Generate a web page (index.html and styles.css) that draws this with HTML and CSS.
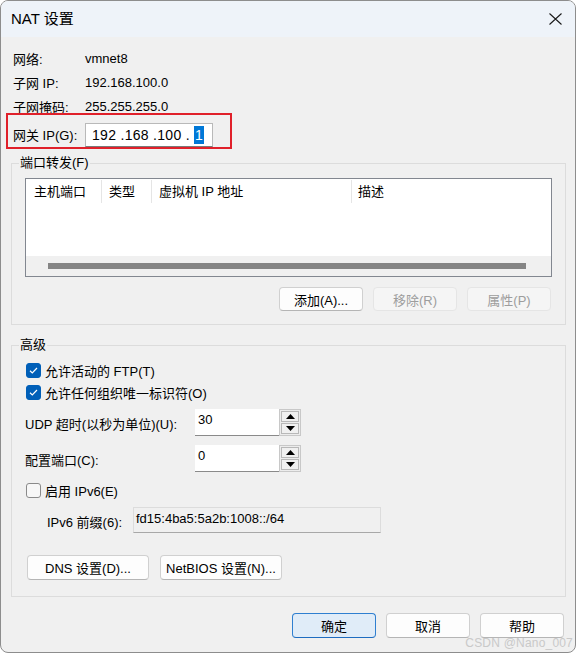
FILE: index.html
```html
<!DOCTYPE html>
<html lang="zh-CN">
<head>
<meta charset="utf-8">
<title>NAT 设置</title>
<link rel="stylesheet" href="styles.css">
</head>
<body>
<div class="dialog">
  <div class="titlebar">
    <span class="title">NAT 设置</span>
    <svg class="close" width="13" height="12" viewBox="0 0 13 12"><path d="M0.5 0.5L12.5 11.5M12.5 0.5L0.5 11.5" stroke="#1a1a1a" stroke-width="1.1" fill="none"/></svg>
  </div>
  <div class="content">
    <div class="info">
      <div class="info-row"><span class="info-label">网络:</span><span>vmnet8</span></div>
      <div class="info-row"><span class="info-label">子网 IP:</span><span>192.168.100.0</span></div>
      <div class="info-row"><span class="info-label">子网掩码:</span><span>255.255.255.0</span></div>
    </div>
    <div class="gateway">
      <span class="gw-label">网关 IP(G):</span>
      <div class="ip-box">192 .168 .100 . <span class="ip-sel">1</span></div>
    </div>

    <fieldset class="group group-pf">
      <legend>端口转发(F)</legend>
      <div class="pf-body">
        <div class="list">
          <div class="list-head">
            <div class="col c1">主机端口</div>
            <div class="col c2">类型</div>
            <div class="col c3">虚拟机 IP 地址</div>
            <div class="col c4">描述</div>
          </div>
          <div class="list-body"></div>
          <div class="list-scroll"><div class="thumb"></div></div>
        </div>
        <div class="pf-buttons">
          <button class="btn">添加(A)...</button>
          <button class="btn disabled">移除(R)</button>
          <button class="btn disabled">属性(P)</button>
        </div>
      </div>
    </fieldset>

    <fieldset class="group group-adv">
      <legend>高级</legend>
      <div class="adv-body">
        <div class="check-row">
          <span class="cb checked"><svg width="15" height="15" viewBox="0 0 15 15"><path d="M4 7.8L6.3 10L11 5" stroke="#fff" stroke-width="1.2" fill="none"/></svg></span>
          <span>允许活动的 FTP(T)</span>
        </div>
        <div class="check-row">
          <span class="cb checked"><svg width="15" height="15" viewBox="0 0 15 15"><path d="M4 7.8L6.3 10L11 5" stroke="#fff" stroke-width="1.2" fill="none"/></svg></span>
          <span>允许任何组织唯一标识符(O)</span>
        </div>
        <div class="spin-row first">
          <span class="spin-label">UDP 超时(以秒为单位)(U):</span>
          <div class="spin-field">30</div>
          <div class="spin-btns">
            <div class="spin-btn"><svg width="9" height="5" viewBox="0 0 9 5"><path d="M0 5L4.5 0L9 5Z" fill="#000"/></svg></div>
            <div class="spin-btn"><svg width="9" height="5" viewBox="0 0 9 5"><path d="M0 0L4.5 5L9 0Z" fill="#000"/></svg></div>
          </div>
        </div>
        <div class="spin-row second">
          <span class="spin-label">配置端口(C):</span>
          <div class="spin-field">0</div>
          <div class="spin-btns">
            <div class="spin-btn"><svg width="9" height="5" viewBox="0 0 9 5"><path d="M0 5L4.5 0L9 5Z" fill="#000"/></svg></div>
            <div class="spin-btn"><svg width="9" height="5" viewBox="0 0 9 5"><path d="M0 0L4.5 5L9 0Z" fill="#000"/></svg></div>
          </div>
        </div>
        <div class="check-row ipv6">
          <span class="cb"></span>
          <span>启用 IPv6(E)</span>
        </div>
        <div class="prefix-row">
          <span class="prefix-label">IPv6 前缀(6):</span>
          <div class="prefix-field">fd15:4ba5:5a2b:1008::/64</div>
        </div>
        <div class="adv-buttons">
          <button class="btn wide">DNS 设置(D)...</button>
          <button class="btn wide">NetBIOS 设置(N)...</button>
        </div>
      </div>
    </fieldset>

    <div class="footer">
      <button class="btn foot primary">确定</button>
      <button class="btn foot">取消</button>
      <button class="btn foot">帮助</button>
    </div>
  </div>
  <div class="watermark">CSDN @Nano_007</div>
</div>
</body>
</html>
```

FILE: styles.css
```css
html, body {
  margin: 0;
  padding: 0;
  background: #ffffff;
}

.dialog {
  position: relative;
  width: 576px;
  height: 653px;
  box-sizing: border-box;
  border: 1px solid #8d8d8d;
  border-radius: 8px;
  background: #f0f0f0;
  overflow: hidden;
  display: flex;
  flex-direction: column;
  font-family: "Liberation Sans", "Noto Sans CJK SC", sans-serif;
  font-size: 13px;
  color: #000;
}

.titlebar {
  height: 36px;
  flex: none;
  display: flex;
  align-items: center;
  padding-left: 10px;
  background: #eef3f9;
}

.title {
  font-size: 15px;
  line-height: 18px;
}

.close {
  margin-left: auto;
  margin-right: 13px;
}

.content {
  flex: 1;
  display: flex;
  flex-direction: column;
  padding: 9px 9px 0 10px;
}

.info {
  display: flex;
  flex-direction: column;
  padding-left: 2px;
}

.info-row {
  height: 24px;
  display: flex;
  align-items: center;
}

.info-label {
  width: 72px;
}

.gateway {
  margin-top: -5px;
  margin-left: -5px;
  width: 226px;
  height: 36px;
  box-sizing: border-box;
  border: 2px solid #e0202a;
  padding: 7px 0 0 5px;
  display: flex;
  align-items: center;
}

.gw-label {
  width: 72px;
}

.ip-box {
  width: 128px;
  height: 24px;
  box-sizing: border-box;
  background: #fff;
  border: 1px solid #b9b9b9;
  border-bottom-color: #7a7a7a;
  padding-left: 6px;
  font-size: 14px;
  letter-spacing: 0.3px;
  line-height: 22px;
  white-space: pre;
}

.ip-sel {
  background: #0078d7;
  color: #fff;
  padding: 1px 1px;
}

.group {
  margin: 0;
  padding: 0 7px;
  border: 1px solid #dcdcdc;
  min-width: 0;
}

.group legend {
  padding: 0 1px;
  line-height: 18px;
}

.group-pf {
  margin-top: 5px;
}

.pf-body {
  padding: 6px 6px 13px 6px;
}

.list {
  height: 99px;
  box-sizing: border-box;
  border: 1px solid #828790;
  background: #fff;
  display: flex;
  flex-direction: column;
}

.list-head {
  display: flex;
  padding-top: 1px;
  height: 25px;
  box-sizing: border-box;
}

.col {
  height: 23px;
  line-height: 23px;
  border-right: 1px solid #e5e5e5;
  box-sizing: border-box;
}

.c1 { width: 76px; padding-left: 8px; }
.c2 { width: 50px; padding-left: 7px; }
.c3 { width: 200px; padding-left: 7px; }
.c4 { flex: 1; padding-left: 6px; border-right: none; }

.list-body {
  flex: 1;
}

.list-scroll {
  height: 20px;
  background: #f0f0f0;
  display: flex;
  align-items: center;
  padding-left: 22px;
  padding-right: 25px;
}

.thumb {
  flex: 1;
  height: 6px;
  background: #858585;
}

.pf-buttons {
  display: flex;
  justify-content: flex-end;
  gap: 10px;
  margin-top: 10px;
  padding-right: 1px;
}

.btn {
  font: inherit;
  color: #000;
  margin: 0;
  padding: 0;
  width: 84px;
  height: 24px;
  box-sizing: border-box;
  background: #fdfdfd;
  border: 1px solid #d0d0d0;
  border-bottom-color: #b5b5b5;
  border-radius: 4px;
}

.btn.disabled {
  background: #f5f5f5;
  border-color: #e5e5e5;
  color: #9d9d9d;
}

.group-adv {
  margin-top: 11px;
}

.adv-body {
  padding: 5px 7px 16px 7px;
  display: flex;
  flex-direction: column;
}

.check-row {
  height: 22px;
  display: flex;
  align-items: center;
  gap: 4px;
}

.cb {
  width: 15px;
  height: 15px;
  box-sizing: border-box;
  border-radius: 3px;
  border: 1px solid #8a8a8a;
  background: #f7f7f7;
  display: flex;
}

.cb.checked {
  background: #005fb8;
  border-color: #005fb8;
}

.cb.checked svg {
  margin: -1px;
}

.spin-row {
  display: flex;
  align-items: center;
}

.spin-row.first {
  margin-top: 6px;
}

.spin-row.second {
  margin-top: 9px;
}

.spin-label {
  width: 170px;
  margin-left: -1px;
  padding-top: 2px;
}

.spin-field {
  width: 84px;
  height: 27px;
  box-sizing: border-box;
  background: #fff;
  border-bottom: 1px solid #8a8a8a;
  padding: 3px 0 0 3px;
  line-height: 16px;
}

.spin-btns {
  width: 22px;
  height: 27px;
  box-sizing: border-box;
  border: 1px solid #c8c8c8;
  background: #ececec;
  padding: 1px;
  display: flex;
  flex-direction: column;
  gap: 1px;
}

.spin-btn {
  flex: 1;
  border: 1px solid #b8b8b8;
  background: #f0f0f0;
  display: flex;
  align-items: center;
  justify-content: center;
}

.check-row.ipv6 {
  margin-top: 7px;
}

.prefix-row {
  display: flex;
  align-items: center;
  margin-top: 6px;
}

.prefix-label {
  width: 86px;
  padding-left: 21px;
  padding-top: 2px;
}

.prefix-field {
  width: 248px;
  height: 26px;
  box-sizing: border-box;
  border: 1px solid #dcdcdc;
  border-bottom-color: #a8a8a8;
  background: #f0f0f0;
  padding: 3px 0 0 2px;
  line-height: 16px;
}

.adv-buttons {
  display: flex;
  gap: 11px;
  margin-top: 22px;
  padding-left: 1px;
}

.btn.wide {
  width: 122px;
  height: 25px;
}

.footer {
  display: flex;
  justify-content: flex-end;
  gap: 10px;
  margin-top: 16px;
  padding-right: 2px;
}

.btn.foot {
  height: 25px;
}

.btn.primary {
  background: #e0ecf8;
  border-color: #2f7fd0;
  border-bottom-color: #1e6cc0;
}

.watermark {
  position: absolute;
  right: 2px;
  bottom: 2px;
  font-size: 12px;
  color: #c9c9c9;
  letter-spacing: 0.2px;
}
```
